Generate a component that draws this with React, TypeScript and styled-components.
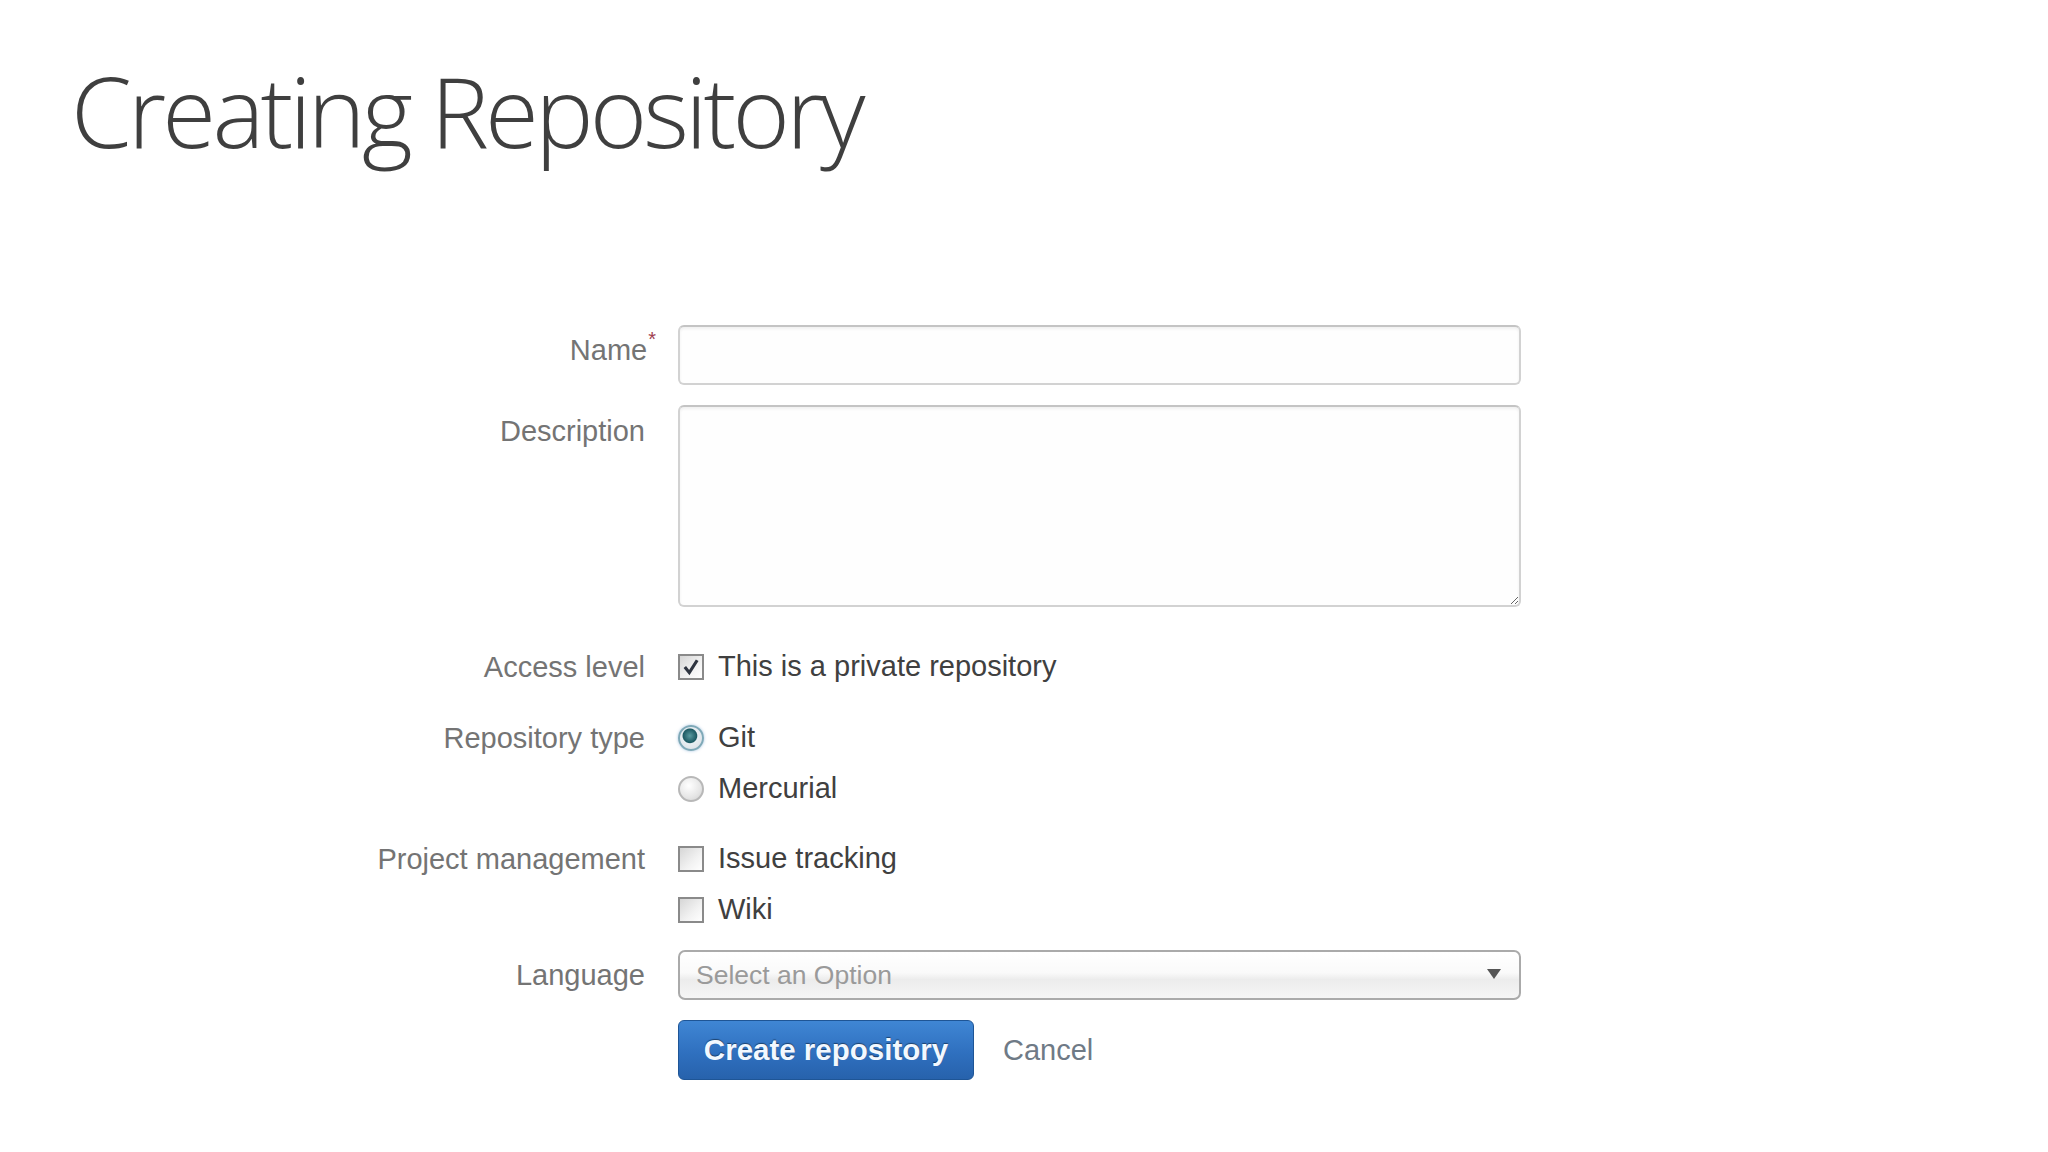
import React from "react";
import styled, { createGlobalStyle } from "styled-components";

const GlobalStyle = createGlobalStyle`
  html, body {
    margin: 0;
    padding: 0;
    background: #ffffff;
  }
  body {
    font-family: "Liberation Sans", Arial, sans-serif;
  }
`;

const Page = styled.div`
  width: 2048px;
  height: 1152px;
  box-sizing: border-box;
  padding: 61px 0 0 71px;
  background: #ffffff;
  overflow: hidden;
`;

const Title = styled.h1`
  margin: 0;
  font-family: "Open Sans", sans-serif;
  font-weight: 300;
  font-size: 98px;
  line-height: 98px;
  letter-spacing: -3.8px;
  color: #3f3f3f;
`;

const Form = styled.form`
  display: flex;
  flex-direction: column;
  margin-top: 166px;
  margin-left: -71px;
`;

const Row = styled.div<{ $mt?: number }>`
  display: grid;
  grid-template-columns: 645px 843px;
  column-gap: 33px;
  margin-top: ${(p) => p.$mt ?? 0}px;
`;

const Label = styled.label<{ $pt?: number }>`
  text-align: right;
  font-size: 29px;
  line-height: 40px;
  color: #747474;
  padding-top: ${(p) => p.$pt ?? 0}px;
`;

const Required = styled.sup`
  color: #a0404f;
  font-size: 20px;
  line-height: 0;
  vertical-align: 14px;
  margin-right: -11px;
  margin-left: 1px;
`;

const fieldBase = `
  box-sizing: border-box;
  width: 100%;
  border: 2px solid #d2d2d2;
  border-top-color: #c4c4c4;
  border-radius: 6px;
  background: #fefefe;
  box-shadow: inset 0 2px 3px rgba(0, 0, 0, 0.06);
  font-family: "Liberation Sans", Arial, sans-serif;
  font-size: 29px;
  color: #333;
  outline: none;
  margin: 0;
`;

const TextInput = styled.input`
  ${fieldBase}
  height: 60px;
  padding: 0 14px;
`;

const TextArea = styled.textarea`
  ${fieldBase}
  height: 202px;
  padding: 10px 14px;
  resize: both;
  display: block;
`;

const OptionList = styled.div`
  display: flex;
  flex-direction: column;
`;

const Option = styled.label`
  display: flex;
  align-items: center;
  gap: 14px;
  height: 51px;
  font-size: 29px;
  color: #404040;
`;

const CheckBox = styled.span`
  box-sizing: border-box;
  width: 26px;
  height: 26px;
  border: 2px solid #8a8a8a;
  background: linear-gradient(135deg, #d6d6d6 0%, #f2f2f2 60%, #ffffff 100%);
  display: flex;
  align-items: center;
  justify-content: center;
  flex: none;
`;

const Radio = styled.span<{ $checked?: boolean }>`
  box-sizing: border-box;
  width: 26px;
  height: 26px;
  border-radius: 50%;
  flex: none;
  border: 2px solid ${(p) => (p.$checked ? "#7fa9b8" : "#b8b8b8")};
  background: ${(p) =>
    p.$checked
      ? "radial-gradient(circle at 45% 40%, #5a9aa0 0%, #1d5a63 38%, #e8eef2 44%, #d8dde2 100%)"
      : "radial-gradient(circle at 40% 35%, #ffffff 0%, #e6e6e6 60%, #cfcfcf 100%)"};
  box-shadow: ${(p) => (p.$checked ? "0 0 3px rgba(80,140,200,0.5)" : "none")};
`;

const Select = styled.div`
  box-sizing: border-box;
  height: 50px;
  border: 2px solid #aaaaaa;
  border-radius: 7px;
  background: linear-gradient(#ffffff 0%, #fafafa 45%, #ececec 60%, #f5f5f5 100%);
  display: flex;
  align-items: center;
  justify-content: space-between;
  padding: 0 18px 0 16px;
  font-size: 26.5px;
  color: #9a9a9a;
`;

const Arrow = styled.span`
  width: 0;
  height: 0;
  border-left: 7px solid transparent;
  border-right: 7px solid transparent;
  border-top: 10px solid #555;
  margin-top: -2px;
`;

const Actions = styled.div`
  display: flex;
  align-items: center;
  gap: 29px;
`;

const PrimaryButton = styled.button`
  box-sizing: border-box;
  width: 296px;
  height: 60px;
  border: 1px solid #1e5596;
  border-radius: 6px;
  background: linear-gradient(#3f86d4 0%, #2f70bf 55%, #2762ac 100%);
  color: #f2f8ff;
  font-family: "Liberation Sans", Arial, sans-serif;
  font-weight: bold;
  font-size: 29.5px;
  text-shadow: 0 -1px 1px rgba(0, 0, 0, 0.45);
  padding: 0;
  cursor: pointer;
`;

const CancelLink = styled.a`
  font-size: 29px;
  color: #6f7a86;
  text-decoration: none;
`;

const CheckMark = () => (
  <svg width="18" height="18" viewBox="0 0 16 16">
    <path d="M2.5 8 L6.5 13 L13.5 2" fill="none" stroke="#2e3440" strokeWidth="2.8" />
  </svg>
);

export default function App() {
  return (
    <>
      <GlobalStyle />
      <Page>
        <Title>Creating Repository</Title>
        <Form onSubmit={(e) => e.preventDefault()}>
          <Row>
            <Label $pt={5}>
              Name<Required>*</Required>
            </Label>
            <TextInput type="text" />
          </Row>
          <Row $mt={20}>
            <Label $pt={6}>Description</Label>
            <TextArea />
          </Row>
          <Row $mt={34}>
            <Label $pt={6}>Access level</Label>
            <OptionList>
              <Option>
                <CheckBox>
                  <CheckMark />
                </CheckBox>
                This is a private repository
              </Option>
            </OptionList>
          </Row>
          <Row $mt={20}>
            <Label $pt={6}>Repository type</Label>
            <OptionList>
              <Option>
                <Radio $checked />
                Git
              </Option>
              <Option>
                <Radio />
                Mercurial
              </Option>
            </OptionList>
          </Row>
          <Row $mt={19}>
            <Label $pt={6}>Project management</Label>
            <OptionList>
              <Option>
                <CheckBox />
                Issue tracking
              </Option>
              <Option>
                <CheckBox />
                Wiki
              </Option>
            </OptionList>
          </Row>
          <Row $mt={15}>
            <Label $pt={5}>Language</Label>
            <Select>
              Select an Option
              <Arrow />
            </Select>
          </Row>
          <Row $mt={20}>
            <span />
            <Actions>
              <PrimaryButton type="submit">Create repository</PrimaryButton>
              <CancelLink href="#">Cancel</CancelLink>
            </Actions>
          </Row>
        </Form>
      </Page>
    </>
  );
}
